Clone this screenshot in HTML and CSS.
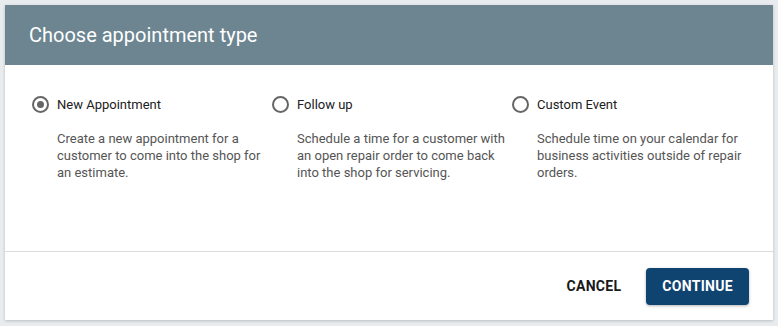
FILE: index.html
```html
<!DOCTYPE html>
<html>
<head>
    <title>Choose appointment type</title>
    <link rel="stylesheet" href="styles.css">
</head>
<body>
    <div class="dialog">
        <div class="dialog-header">
            <h1>Choose appointment type</h1>
        </div>
        <div class="dialog-body">
            <label class="option">
                <span class="option-row">
                    <span class="radio checked"></span>
                    <span class="option-title">New Appointment</span>
                </span>
                <span class="option-desc">Create a new appointment for a customer to come into the shop for an estimate.</span>
            </label>
            <label class="option">
                <span class="option-row">
                    <span class="radio"></span>
                    <span class="option-title">Follow up</span>
                </span>
                <span class="option-desc">Schedule a time for a customer with an open repair order to come back into the shop for servicing.</span>
            </label>
            <label class="option">
                <span class="option-row">
                    <span class="radio"></span>
                    <span class="option-title">Custom Event</span>
                </span>
                <span class="option-desc">Schedule time on your calendar for business activities outside of repair orders.</span>
            </label>
        </div>
        <div class="dialog-footer">
            <button class="btn-text">Cancel</button>
            <button class="btn-primary">Continue</button>
        </div>
    </div>
</body>
</html>
```

FILE: styles.css
```css
body {
    margin: 0;
    padding: 5px;
    background-color: #e9ecef;
    font-family: Roboto, 'Liberation Sans', sans-serif;
}

.dialog {
    width: 768px;
    background-color: #fff;
    box-shadow: 0 1px 3px rgba(0, 0, 0, 0.2);
}

.dialog-header {
    height: 60px;
    display: flex;
    align-items: center;
    padding: 0 24px;
    background-color: #6c8591;
}

.dialog-header h1 {
    margin: 0;
    color: #fff;
    font-size: 20px;
    font-weight: 400;
}

.dialog-body {
    height: 187px;
    box-sizing: border-box;
    padding: 31px 24px 0 27px;
    display: grid;
    grid-template-columns: 240px 240px 240px;
    align-items: start;
    border-bottom: 1px solid #dcdcdc;
}

.option {
    display: flex;
    flex-direction: column;
    cursor: pointer;
}

.option-row {
    display: flex;
    align-items: center;
    gap: 8px;
}

.radio {
    width: 17px;
    height: 17px;
    box-sizing: border-box;
    border: 2px solid #666;
    border-radius: 50%;
    display: flex;
    align-items: center;
    justify-content: center;
}

/* inner dot for the selected option */
.radio.checked::after {
    content: '';
    width: 7px;
    height: 7px;
    border-radius: 50%;
    background-color: #666;
}

.option-title {
    font-size: 13px;
    line-height: 17px;
    color: #212121;
}

.option-desc {
    margin-top: 17px;
    padding-left: 25px;
    width: 214px;
    font-size: 13px;
    line-height: 17px;
    color: #555;
}

.dialog-footer {
    height: 68px;
    display: flex;
    justify-content: flex-end;
    align-items: center;
    gap: 9px;
    padding: 0 24px;
}

.btn-text,
.btn-primary {
    font-family: Roboto, 'Liberation Sans', sans-serif;
    font-size: 14px;
    font-weight: 700;
    letter-spacing: 0.3px;
    text-transform: uppercase;
    border: none;
    border-radius: 4px;
    cursor: pointer;
}

.btn-text {
    height: 37px;
    padding: 0 16px;
    background: none;
    color: #1a1a1a;
}

.btn-primary {
    height: 37px;
    padding: 0 16px;
    background-color: #0f4470;
    color: #fff;
    box-shadow: 0 1px 3px rgba(0, 0, 0, 0.3);
}
```
